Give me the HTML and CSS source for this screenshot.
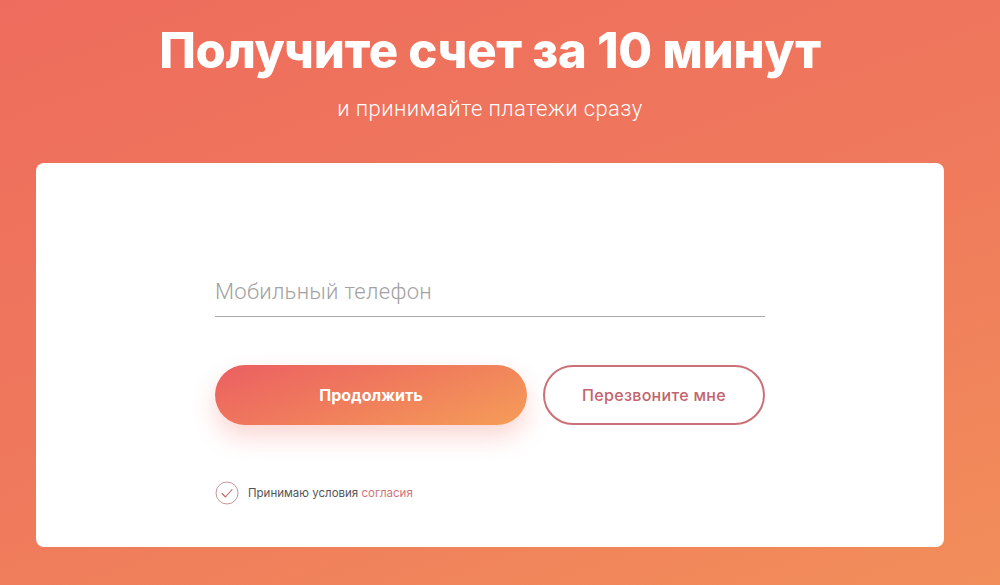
FILE: index.html
```html
<!DOCTYPE html>
<html lang="ru">
<head>
<meta charset="utf-8">
<title>Получите счет за 10 минут</title>
<link rel="stylesheet" href="styles.css">
</head>
<body>
<div class="page">
  <div class="wrap">
    <header class="hero">
      <h1 class="title">Получите счет за 10 минут</h1>
      <p class="subtitle">и принимайте платежи сразу</p>
    </header>
    <main class="card">
      <form class="form">
        <label class="field">
          <input class="input" type="tel" placeholder="Мобильный телефон">
        </label>
        <div class="actions">
          <button type="button" class="btn btn-primary">Продолжить</button>
          <button type="button" class="btn btn-outline">Перезвоните мне</button>
        </div>
        <div class="agree">
          <span class="check">
            <svg viewBox="0 0 24 24" width="24" height="24">
              <circle cx="12" cy="12" r="11" fill="none" stroke="#c9959a" stroke-width="1"/>
              <path d="M7 12.5 L10.5 16 L17 8.5" fill="none" stroke="#c0646e" stroke-width="1.1" stroke-linecap="round" stroke-linejoin="round"/>
            </svg>
          </span>
          <span class="agree-text">Принимаю условия <a class="link" href="#">согласия</a></span>
        </div>
      </form>
    </main>
  </div>
</div>
</body>
</html>
```

FILE: styles.css
```css
html, body {
  margin: 0;
  padding: 0;
}
body {
  width: 1000px;
  height: 585px;
  overflow: hidden;
  font-family: "Inter", "Roboto", "Liberation Sans", sans-serif;
}
.page {
  width: 1000px;
  height: 585px;
  background: linear-gradient(160deg, #ee6c5d 0%, #ef7a5c 55%, #f28e5a 100%);
}
.wrap {
  width: 980px;
  display: flex;
  flex-direction: column;
  align-items: center;
}
.hero {
  text-align: center;
  color: #fff;
  padding-top: 20px;
  height: 163px;
  box-sizing: border-box;
}
.title {
  margin: 0;
  font-family: "Inter", sans-serif;
  font-weight: 800;
  font-size: 49px;
  line-height: 62px;
  letter-spacing: -0.3px;
}
.subtitle {
  margin: 13px 0 0;
  font-family: "Roboto", sans-serif;
  font-weight: 300;
  font-size: 22px;
  line-height: 28px;
  letter-spacing: 0.4px;
}
.card {
  width: 908px;
  height: 384px;
  background: #fff;
  border-radius: 8px;
  display: flex;
  justify-content: center;
  box-sizing: border-box;
  padding-top: 109px;
}
.form {
  width: 550px;
  display: flex;
  flex-direction: column;
}
.field {
  display: block;
  border-bottom: 1px solid #a8a8a8;
}
.input {
  width: 100%;
  box-sizing: border-box;
  border: 0;
  outline: none;
  padding: 0 0 6px;
  height: 44px;
  font-family: "Roboto", sans-serif;
  font-weight: 300;
  font-size: 22px;
  letter-spacing: 0.3px;
  color: #333;
  background: transparent;
}
.input::placeholder {
  color: #a2a2a2;
}
.actions {
  display: flex;
  gap: 16px;
  margin-top: 48px;
}
.btn {
  height: 60px;
  border-radius: 30px;
  font-family: "Inter", sans-serif;
  font-size: 16px;
  cursor: pointer;
  padding: 0;
}
.btn-primary {
  width: 312px;
  border: 0;
  color: #fff;
  font-weight: 700;
  background: linear-gradient(160deg, #eb5f62 0%, #f07d5c 50%, #f59d58 100%);
  box-shadow: 0 12px 24px rgba(240, 110, 100, 0.28);
}
.btn-outline {
  width: 222px;
  background: #fff;
  border: 2px solid #cc7078;
  color: #c4636d;
  font-weight: 500;
  letter-spacing: 0.3px;
}
.agree {
  display: flex;
  align-items: center;
  gap: 9px;
  margin-top: 56px;
}
.check {
  width: 24px;
  height: 24px;
  display: block;
}
.check svg {
  display: block;
}
.agree-text {
  font-family: "Inter", sans-serif;
  font-size: 11.5px;
  color: #555;
}
.link {
  color: #d0737d;
  text-decoration: none;
}
```
